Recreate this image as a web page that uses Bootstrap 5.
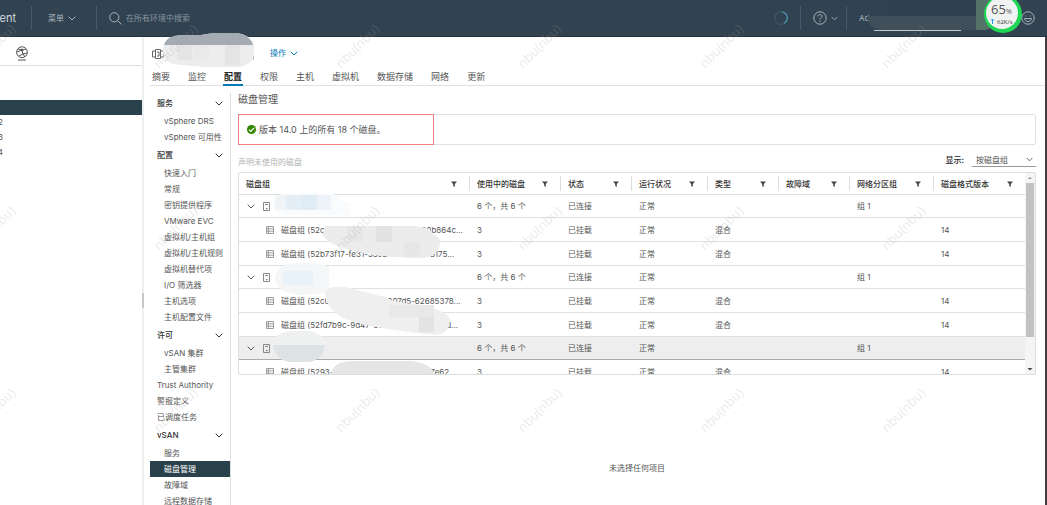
<!DOCTYPE html>
<html lang="zh-CN">
<head>
<meta charset="utf-8">
<meta name="viewport" content="width=device-width, initial-scale=1">
<title>vSphere Client</title>
<link href="https://cdn.jsdelivr.net/npm/bootstrap@5.3.0/dist/css/bootstrap.min.css" rel="stylesheet">
<style>
  body{font-family:Inter,"Noto Sans CJK SC",sans-serif;font-size:8px;line-height:16px;color:#555;background:#fff}
  a{color:inherit;text-decoration:none}
  button{color:inherit;background:none;border:0;padding:0}
  svg{display:block;flex:none}
  .stroke{fill:none;stroke:currentColor}
  .topbar{height:37px;background:#314351;color:#a9b4bc;border-bottom:1px solid #25333f}
  .brand{width:31px;font-size:11px;color:#d3dade;padding-right:15px;overflow:hidden}
  .vline{width:1px;height:24px;background:#465966}
  .search-box{background:none;border:0;outline:0;color:#a9b4bc;font-size:8px;padding:0;width:200px}
  .search-box::placeholder{color:#8795a0;opacity:1}
  .account{width:166px}
  .account-mask{left:12px;top:-10px}
  .tree{width:144px;border-right:2px solid #edf0f0}
  .tree-tabs{height:29px;border-bottom:1px solid #dcdfe0;padding:4px 0 0 15px}
  .tree-gap{height:34px}
  .tree-row{height:15px;line-height:15px;overflow:hidden}
  .tree-row a{width:3px;display:flex;justify-content:flex-end;overflow:hidden}
  .selected{background:#29414a;color:#fff}
  .handle{left:142px;top:256px;width:2px;height:15px;background:#c4c8c8}
  .workspace{min-height:0}
  .main-area{padding-left:6px;border-right:2px solid #453f43}
  .object-bar{height:32px;padding-left:2px;color:#666}
  .object-name{width:90px;height:14px;border-right:1px solid #bbb}
  .object-mask{left:163px;top:-4px}
  .actions{color:#0079b8}
  .tab-strip{gap:16px;height:17px;padding-left:1px;border-bottom:1px solid #dfe1e1;font-size:9px;line-height:16px}
  .tab-strip a{padding:0 1px;height:17px}
  .tab-strip .active{color:#222;font-weight:600;border-bottom:2px solid #0079b8}
  .side{width:81px;border-right:1px solid #dcdfdf;margin-top:7px}
  .side a{display:block;padding-left:14px;height:16px;white-space:nowrap}
  .side a.top-level{padding-left:7px}
  .side button{display:flex;justify-content:space-between;align-items:center;width:100%;height:20px;padding:0 7px;font-weight:500;color:#333}
  .content{padding:6px 9px 0 7px}
  .heading{font-size:10px;line-height:14px;margin:0;font-weight:400}
  .notice{height:31px;border:1px solid #dfe1e1;border-radius:2px;margin-top:8px}
  .notice-mark{width:196px;height:31px;margin:-1px;border:1px solid #f08080;font-size:9px;padding-left:8px;gap:3px}
  .claim{color:#b3b3b3;padding-top:5px}
  .view-select{width:64px;height:15px;border:0;border-bottom:1px solid #999;background:none;appearance:none;font-size:8px;color:#555;padding:0 4px;outline:0}
  .select-arrow{right:3px;top:5px;pointer-events:none}
  .grid-box{height:203px;border:1px solid #dcdede;border-radius:2px;margin-top:2px}
  .grid-view{overflow:hidden}
  .grid-view table{width:100%;table-layout:fixed;border-collapse:separate;border-spacing:0}
  .c-used{width:91px}.c-state{width:71px}.c-health{width:76px}.c-part{width:84px}.c-version{width:92px}
  .grid-view th{height:22px;padding:0;color:#333;font-weight:500;border-bottom:1px solid #dcdede}
  .grid-view th>div{height:15px;padding:0 12px 0 7px;border-left:1px solid #dcdede}
  .grid-view th:first-child>div{border-left:0}
  .grid-view td{height:24px;padding:0 0 0 8px;border-bottom:1px solid #dfe1e1;white-space:nowrap}
  .grid-view .host td{height:23px}
  .grid-view .current td{background:#eee;border-bottom-color:#aaa}
  .host .d-flex{gap:8px}
  .disk-group .d-flex{gap:7px;padding-left:19px}
  .bar{width:10px;background:#f5f5f5}
  .bar-thumb{width:8px;height:154px;background:#c2c2c2}
  .grid-masks{left:0;top:0}
  .grip{width:17px;height:4px;margin:1px auto 0;background-image:radial-gradient(#aaa 30%,transparent 40%);background-size:2px 2px}
  .empty{padding-top:80px}
  .meter{right:20px;top:0}
  .overlay{pointer-events:none;left:0;top:0}
  .stamp{font-family:"Open Sans",sans-serif;font-size:13px;fill:#999;fill-opacity:.22}
</style>
</head>
<body class="vh-100 overflow-hidden d-flex flex-column position-relative">
<svg width="0" height="0" class="position-absolute" aria-hidden="true">
  <defs>
    <symbol id="chev" viewBox="0 0 8 5"><path d="M.7.7 4 4 7.3.7" fill="none" stroke="currentColor"/></symbol>
    <symbol id="filter" viewBox="0 0 6 6"><path d="M0 .5h6L3.800 3v3L2.200 5V3z" fill="#444"/></symbol>
    <symbol id="host" viewBox="0 0 7 9"><path d="M.5.5h6v8h-6zM2 2.500h3" fill="none" stroke="#888"/><path d="M3 6h1.500v1.300H3z" fill="#777"/></symbol>
    <symbol id="disks" viewBox="0 0 8 8"><path d="M.5.5h7v7h-7zM.5 2.800h7M.5 5.200h7M2.400.5v7" fill="none" stroke="#888" stroke-width=".8"/></symbol>
    <pattern id="wm" x="144" y="10" width="182" height="182" patternUnits="userSpaceOnUse"><text class="stamp" transform="translate(15 59) rotate(-45)">nbu(nbu)</text></pattern>
  </defs>
</svg>

<header class="topbar d-flex align-items-center flex-shrink-0">
  <div class="brand d-flex justify-content-end">ient</div>
  <div class="vline"></div>
  <button class="d-flex align-items-center mx-3">菜单 <svg width="8" height="5" class="ms-1"><use href="#chev"/></svg></button>
  <div class="vline ms-1"></div>
  <label class="d-flex align-items-center ps-2 ms-1 gap-1">
    <svg width="13" height="13" viewBox="0 0 13 13" class="stroke"><circle cx="5.300" cy="5.300" r="4.600"/><path d="m8.800 8.800 3.700 3.700"/></svg>
    <input class="search-box" type="text" placeholder="在所有环境中搜索" aria-label="搜索">
  </label>
  <svg width="14" height="14" viewBox="0 0 14 14" class="ms-auto me-2" fill="none"><circle cx="7" cy="7" r="6.300" stroke="#465d6a"/><path d="M8 .8a6.300 6.300 0 0 1 2 11.700" stroke="#4b91ae" stroke-width="1.300"/></svg>
  <div class="vline ms-1"></div>
  <button class="d-flex align-items-center gap-1 mx-2 ps-1" aria-label="帮助">
    <svg width="14" height="14" viewBox="0 0 14 14" class="stroke"><circle cx="7" cy="7" r="6.200"/><path d="M5 5.400c0-2.500 4-2.400 4 0C9 7 7 6.800 7 8.500M7 9.700v1.200"/></svg>
    <svg width="7" height="5"><use href="#chev"/></svg>
  </button>
  <div class="vline"></div>
  <div class="account position-relative ms-2 ps-1">Ad
    <svg class="account-mask position-absolute" width="125" height="31" viewBox="0 0 125 31"><path d="M0 16h110V0h15v26q-2 4-10 4H14Q2 29 0 16z" fill="#414f5b"/><path d="M16 0h94v15H16z" fill="#304250"/><path d="M109 0h16v27l-6 3h-10z" fill="#557269"/></svg>
  </div>
  <button aria-label="反馈" class="me-1"><svg width="14" height="14" viewBox="0 0 14 14" class="stroke me-2"><circle cx="7" cy="7" r="6.200"/><path d="M4.800 4.500v1M9.200 4.500v1M3.500 7.500h7c-.4 4-6.600 4-7 0z"/></svg></button>
</header>

<div class="workspace d-flex flex-grow-1 position-relative">
  <aside class="tree flex-shrink-0">
    <div class="tree-tabs d-flex align-items-center">
      <svg width="14" height="15" viewBox="0 0 14 15" class="stroke"><circle cx="7" cy="6.200" r="5.400"/><path d="M3 3l4 1 4-1M2 6l5-2 1 4 4-1M4 10l4-2 2 3M3 14h8"/><circle cx="7" cy="4" r="1"/></svg>
    </div>
    <div class="tree-gap"></div>
    <div class="tree-row selected"></div>
    <div class="tree-row"><a href="#">2</a></div>
    <div class="tree-row"><a href="#">3</a></div>
    <div class="tree-row"><a href="#">4</a></div>
  </aside>
  <div class="handle position-absolute"></div>

  <main class="main-area flex-grow-1 d-flex flex-column overflow-hidden">
    <div class="object-bar d-flex align-items-center flex-shrink-0">
      <svg width="12" height="11" viewBox="0 0 12 11" class="stroke"><path d="M3.500 1.500h5v9h-5zM3 3H.500v6H3M9 3h2.500v6H9M5 4h2v4H5"/></svg>
      <div class="object-name"></div>
      <button class="actions d-flex align-items-center gap-1 ms-3">操作 <svg width="8" height="5"><use href="#chev"/></svg></button>
    </div>
    <nav class="tab-strip d-flex flex-shrink-0">
      <a href="#">摘要</a><a href="#">监控</a><a href="#" class="active">配置</a><a href="#">权限</a><a href="#">主机</a><a href="#">虚拟机</a><a href="#">数据存储</a><a href="#">网络</a><a href="#">更新</a>
    </nav>
    <div class="d-flex flex-grow-1 overflow-hidden">
      <nav class="side flex-shrink-0">
        <button>服务 <svg width="8" height="5"><use href="#chev"/></svg></button>
        <a href="#">vSphere DRS</a><a href="#">vSphere 可用性</a>
        <button>配置 <svg width="8" height="5"><use href="#chev"/></svg></button>
        <a href="#">快速入门</a><a href="#">常规</a><a href="#">密钥提供程序</a><a href="#">VMware EVC</a><a href="#">虚拟机/主机组</a><a href="#">虚拟机/主机规则</a><a href="#">虚拟机替代项</a><a href="#">I/O 筛选器</a><a href="#">主机选项</a><a href="#">主机配置文件</a>
        <button>许可 <svg width="8" height="5"><use href="#chev"/></svg></button>
        <a href="#">vSAN 集群</a><a href="#">主管集群</a><a href="#" class="top-level">Trust Authority</a><a href="#" class="top-level">警报定义</a><a href="#" class="top-level">已调度任务</a>
        <button>vSAN <svg width="8" height="5"><use href="#chev"/></svg></button>
        <a href="#">服务</a><a href="#" class="selected">磁盘管理</a><a href="#">故障域</a><a href="#">远程数据存储</a>
      </nav>
      <section class="content flex-grow-1 overflow-hidden">
        <h1 class="heading">磁盘管理</h1>
        <div class="notice">
          <div class="notice-mark d-flex align-items-center">
            <svg width="9" height="9" viewBox="0 0 9 9"><circle cx="4.500" cy="4.500" r="4.500" fill="#318700"/><path d="m2 4.600 1.800 1.800L7 3" fill="none" stroke="#fff" stroke-width="1.200"/></svg>
            <span>版本 14.0 上的所有 18 个磁盘。</span>
          </div>
        </div>
        <div class="d-flex justify-content-between pt-1">
          <span class="claim">声明未使用的磁盘</span>
          <div class="d-flex align-items-center gap-2">
            <label for="view" class="fw-medium text-dark">显示:</label>
            <div class="position-relative">
              <select id="view" class="view-select"><option>按磁盘组</option></select>
              <svg width="7" height="5" class="select-arrow position-absolute"><use href="#chev"/></svg>
            </div>
          </div>
        </div>
        <div class="grid-box d-flex position-relative">
          <div class="grid-view flex-grow-1">
            <table>
              <colgroup><col><col class="c-used"><col class="c-state"><col class="c-health"><col class="c-state"><col class="c-state"><col class="c-part"><col class="c-version"></colgroup>
              <thead><tr id="head"></tr></thead>
              <tbody id="rows"></tbody>
            </table>
          </div>
          <div class="bar d-flex flex-column align-items-center justify-content-between flex-shrink-0">
            <svg width="10" height="10" viewBox="0 0 10 10"><path d="m3 6 2-2 2 2z" fill="#999"/></svg>
            <div class="bar-thumb"></div>
            <div class="flex-grow-1"></div>
            <svg width="10" height="10" viewBox="0 0 10 10"><path d="m2.500 4 2.500 2.500L7.500 4z" fill="#444"/></svg>
          </div>
          <svg class="grid-masks position-absolute" width="230" height="201" viewBox="0 0 230 201">
            <path d="M37 24q2-4 20-4h30q14 1 15 8l10 2v12H60q-25 2-25-9z" fill="#fafbfc"/><path d="M36 22h11v15H36z" fill="#f1f4f6"/><path d="M47 22h16v15H47z" fill="#e4eef6"/><path d="M63 22h15v15H63z" fill="#dfebf5"/><path d="M78 22h14v15H78z" fill="#edf3f8"/>
            <path d="M86 53h88q18 1 20 8 8 3 7 10-2 14-20 14-40 0-70-8-25-7-27-16z" fill="#ececec"/><path d="M137 53h16v16h-16z" fill="#e2e2e2"/><path d="M108 53h16v16h-16zM165 69h16v15h-16z" fill="#e7e7e7"/>
            <path d="M36 104q3-13 20-14 22-2 34 4v24q-10 4-30 4-24-3-24-18z" fill="#f5f6f7"/><path d="M44 98h30v14H44z" fill="#e9f2f9"/>
            <path d="M86 122q0-10 20-8l40 10q10 6 30 7 34 6 35 16 0 13-14 15-62-6-88-15-20-8-23-25z" fill="#efefef"/><path d="M150 132h45v12h-45z" fill="#e8e8e8"/><path d="M180 144h15v15h-15z" fill="#e3e3e3"/>
            <path d="M33 174q0-14 18-16h20q15 4 16 13-2 15-18 18H50q-14-3-17-15z" fill="#eff1f1"/><path d="M34 172h52q-2 15-16 17H50q-14-3-16-17z" fill="#dde3e5"/>
            <path d="M92 201q2-12 20-13h60q19 2 24 13z" fill="#e5e5e5"/>
          </svg>
        </div>
        <div class="grip"></div>
        <div class="empty text-center">未选择任何项目</div>
      </section>
    </div>
  </main>

  <svg class="object-mask position-absolute" width="92" height="36" viewBox="0 0 92 36"><path d="M0 16Q2 4 18 2h20Q52-1 74 0q14 2 17 12v10q-2 10-15 12H40L10 31Q0 28 0 20z" fill="#ededed"/><path d="M1 12Q4 2 18 2h20Q52-1 74 0q13 2 16 12z" fill="#a4abb3"/><path d="M14 12h15v15H14zM62 12h15v20H62z" fill="#e4e4e4"/><path d="M30 12h16v15H30z" fill="#e9e9e9"/></svg>
</div>

<svg class="meter position-absolute" width="154" height="34" viewBox="0 0 154 34">
  <path d="M1 30h87v1H1z" fill="#c6c9cb"/>
  <circle cx="130" cy="14" r="19" fill="#1fd655"/><circle cx="129" cy="13" r="16" fill="#f0f3f1"/>
  <text x="118" y="14" font-size="13" fill="#555" font-family="Open Sans">65<tspan font-size="7">%</tspan></text>
  <path d="M119.500 24v-5m-1.500 1.500 1.500-1.500 1.500 1.500" stroke="#2196f3" fill="none"/>
  <text x="124" y="24" font-size="6" fill="#333" font-family="Open Sans">62K/s</text>
</svg>
<svg class="overlay position-absolute w-100 h-100" aria-hidden="true"><rect width="100%" height="100%" fill="url(#wm)"/></svg>

<script src="https://cdn.jsdelivr.net/npm/bootstrap@5.3.0/dist/js/bootstrap.bundle.min.js"></script>
<script>
  const heads = ['磁盘组','使用中的磁盘','状态','运行状况','类型','故障域','网络分区组','磁盘格式版本'];
  document.getElementById('head').innerHTML = heads.map(h =>
    `<th scope="col"><div class="d-flex justify-content-between align-items-center">${h}<svg width="6" height="6"><use href="#filter"/></svg></div></th>`).join('');
  const rows = [
    null, '磁盘组 (52c00000-0000-0000-000000b864c...', '磁盘组 (52b73f17-fe31-3392-000-0000b175...',
    null, '磁盘组 (52c00000-0000-00007d5-62685378...', '磁盘组 (52fd7b9c-9d47-3000-0000-00000d...',
    'current', '磁盘组 (5293-0000-0000-0000-000007e62'
  ];
  const chev = '<svg width="8" height="5"><use href="#chev"/></svg>';
  document.getElementById('rows').innerHTML = rows.map(r => {
    const host = !r || r === 'current';
    return host
      ? `<tr class="host ${r || ''}"><td><div class="d-flex align-items-center">${chev}<svg width="7" height="9"><use href="#host"/></svg></div></td><td>6 个，共 6 个</td><td>已连接</td><td>正常</td><td></td><td></td><td>组 1</td><td></td></tr>`
      : `<tr class="disk-group"><td><div class="d-flex align-items-center"><svg width="8" height="8"><use href="#disks"/></svg>${r}</div></td><td>3</td><td>已挂载</td><td>正常</td><td>混合</td><td></td><td></td><td>14</td></tr>`;
  }).join('');
</script>
</body>
</html>
